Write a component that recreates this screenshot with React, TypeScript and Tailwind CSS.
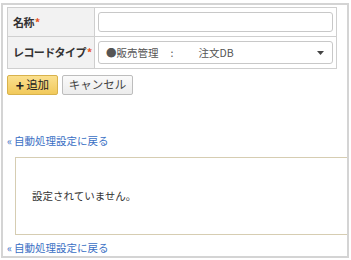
import React from 'react';

const font = { fontFamily: '"Noto Sans CJK JP", "Noto Sans", sans-serif' };

function Required() {
  return <span className="text-[#e8541e] font-bold ml-[1px] tracking-normal">*</span>;
}

function BackLink() {
  return (
    <a className="block text-[10.5px] text-[#3a6fc4] leading-none cursor-pointer">
      <span className="mr-[2px]">«</span>自動処理設定に戻る
    </a>
  );
}

export default function App() {
  return (
    <div className="w-[351px] h-[260px] bg-white pt-[3px] pl-[1px]" style={font}>
      <div className="w-[348px] h-[255px] border-2 border-[#d4d4d4] overflow-hidden pl-[4px] pt-[2px]">
        {/* Form table */}
        <table className="w-[330px] table-fixed border-collapse text-[12px] text-[#333]">
          <tbody>
            <tr className="h-[29px]">
              <th className="w-[87px] bg-[#f2f2f2] border border-[#cfcfcf] text-left font-bold pl-[5px] text-[11px] tracking-[-0.6px]">
                名称<Required />
              </th>
              <td className="border border-[#cfcfcf] px-[3px]">
                <input className="w-full h-[20px] border border-[#c8c8c8] rounded-[3px] outline-none px-1" />
              </td>
            </tr>
            <tr className="h-[32px]">
              <th className="bg-[#f2f2f2] border border-[#cfcfcf] text-left font-bold pl-[5px] whitespace-nowrap text-[11px] tracking-[-0.6px]">
                レコードタイプ<Required />
              </th>
              <td className="border border-[#cfcfcf] px-[3px]">
                <div className="h-[23px] border border-[#c8c8c8] rounded-[3px] flex items-center pl-[7px] pr-[8px] text-[10.5px] text-[#555]">
                  <span>●販売管理</span>
                  <span className="ml-[12px]">:</span>
                  <span className="ml-[25px]">注文DB</span>
                  <svg className="ml-auto" width="7" height="4" viewBox="0 0 7 4">
                    <path d="M0 0 H7 L3.5 4 Z" fill="#444" />
                  </svg>
                </div>
              </td>
            </tr>
          </tbody>
        </table>

        {/* Buttons */}
        <div className="flex gap-[4px] mt-[6px]">
          <button className="w-[51px] h-[20px] flex items-center justify-center text-[11.5px] text-[#222] rounded-[2px] border border-[#d8b24c] bg-gradient-to-b from-[#fbe08e] to-[#f1c95a]">
            <span className="font-bold text-[14px] mr-[2px] leading-none">+</span>追加
          </button>
          <button className="w-[71px] h-[20px] flex items-center justify-center text-[11.5px] text-[#444] rounded-[2px] border border-[#bdbdbd] bg-gradient-to-b from-[#fafafa] to-[#ececec]">
            キャンセル
          </button>
        </div>

        <div className="mt-[41px]">
          <BackLink />
        </div>

        {/* Empty list box */}
        <div className="ml-[8px] mt-[10px] w-[360px] h-[78px] border border-[#d6cdb2] flex items-center pl-[16px] text-[10.5px] text-[#333]">
          設定されていません。
        </div>

        <div className="mt-[8px]">
          <BackLink />
        </div>
      </div>
    </div>
  );
}
